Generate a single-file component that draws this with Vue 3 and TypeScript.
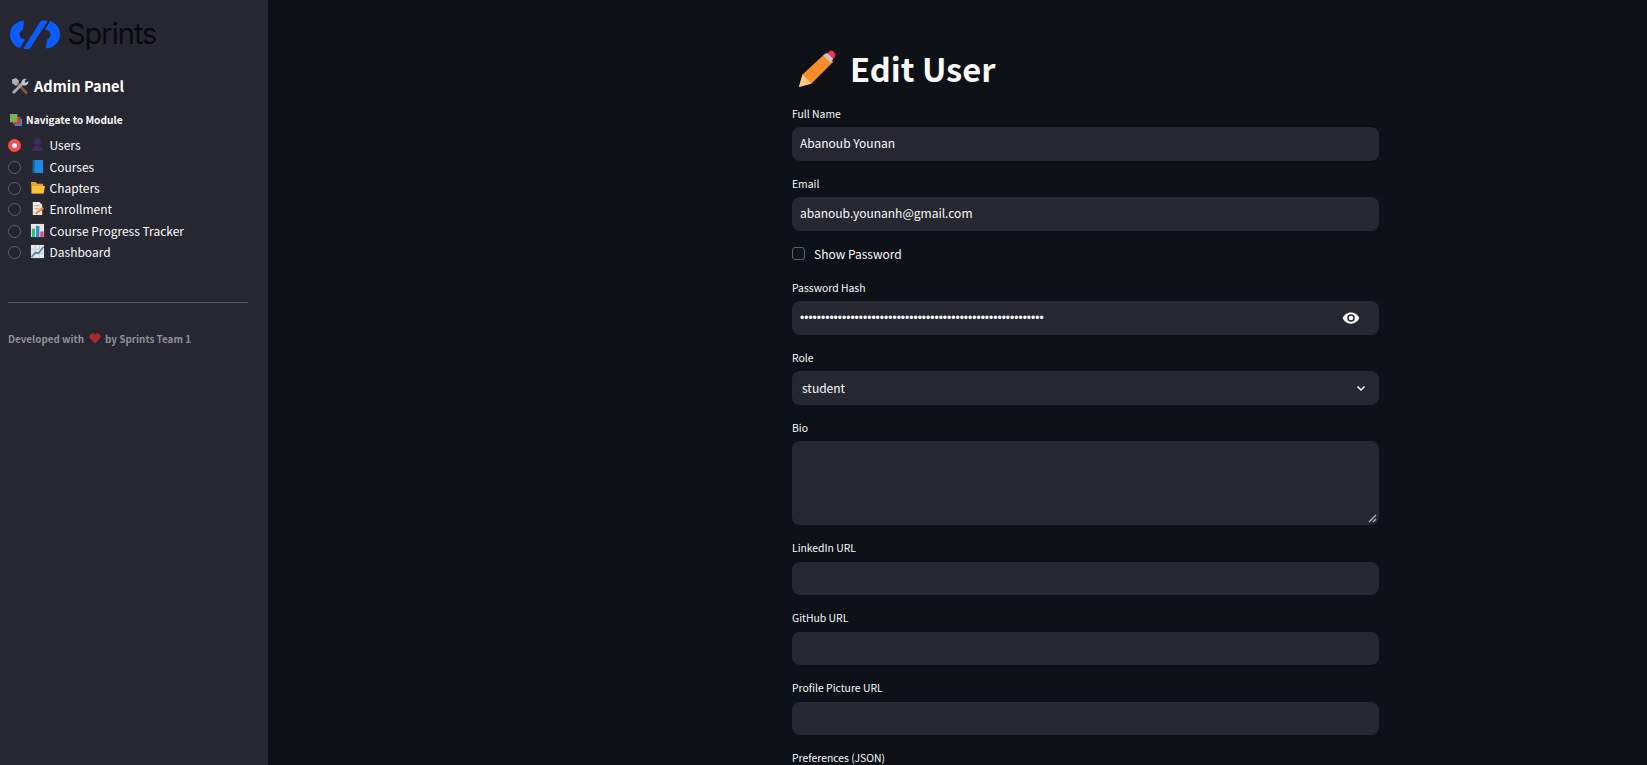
<script setup lang="ts">
const modules = [
  { name: 'Users', icon: 'user' },
  { name: 'Courses', icon: 'book' },
  { name: 'Chapters', icon: 'folder' },
  { name: 'Enrollment', icon: 'memo' },
  { name: 'Course Progress Tracker', icon: 'bars' },
  { name: 'Dashboard', icon: 'chart' },
]
const dots = '•'.repeat(58)
</script>

<template>
  <div class="page">
    <aside class="sidebar">
      <div class="logo">
        <svg width="50" height="29" viewBox="0 0 50 29">
          <path fill="#0b5cff" d="M14 .5C5 1.5 0 7.5 0 14.5 0 21.5 4.5 26.5 10 28L15 19.5C11.5 19 9.5 17 9.5 14.5 9.5 12 11 10.5 13 9.5Z" />
          <path fill="#0b5cff" transform="rotate(180 25 14.5)" d="M14 .5C5 1.5 0 7.5 0 14.5 0 21.5 4.5 26.5 10 28L15 19.5C11.5 19 9.5 17 9.5 14.5 9.5 12 11 10.5 13 9.5Z" />
          <path fill="#0b5cff" d="M32 .5H36Q37.5 .5 37 2L20.5 27.5Q19.5 29 18 29H15Q13.5 29 14 27.5L30 2Q31 .5 32 .5Z" />
        </svg>
        <span class="logo-text">Sprints</span>
      </div>
      <h3 class="panel-title">
        <svg width="18" height="17" viewBox="0 0 18 17">
          <path d="M5 4 L16 15.5" stroke="#8a5240" stroke-width="2.8" />
          <path d="M1 1.5 L5 0 L8 3 L7.5 5 L5 8 L1 5 Z" fill="#aeb2b8" />
          <path d="M2 15 L12 5" stroke="#a8acb2" stroke-width="2.8" />
          <path d="M10.5 5.5 C10 2.5 12.5 .2 15.5 .8 L13.5 3.2 L15 4.8 L17.4 2.8 C17.8 5.8 15.5 8 12.5 7.5 Z" fill="#c2c5ca" />
        </svg>
        Admin Panel
      </h3>
      <p class="nav-label">
        <svg width="12" height="12" viewBox="0 0 13 13">
          <rect x="5" y="5" width="8" height="8" fill="#3b88c3" />
          <rect x="3" y="3" width="8" height="8" fill="#dd2e44" />
          <rect x="0" y="0" width="8" height="9" fill="#77b255" />
        </svg>
        Navigate to Module
      </p>
      <ul class="radio-list">
        <li v-for="(m, i) in modules" :key="m.name" class="radio-row">
          <span class="radio" :class="{ on: i === 0 }"></span>
          <svg class="row-icon" width="15" height="15" viewBox="0 0 16 16">
            <template v-if="m.icon === 'user'">
              <circle cx="8" cy="5" r="3.8" fill="#452a5c" />
              <path d="M1.5 15 Q3.5 9 8 9 Q12.5 9 14.5 15 Z" fill="#452a5c" />
            </template>
            <template v-else-if="m.icon === 'book'">
              <rect x="3" y="1" width="11" height="14" rx="1" fill="#1e88e5" />
              <rect x="3" y="1" width="2" height="14" fill="#1565a8" />
            </template>
            <template v-else-if="m.icon === 'folder'">
              <path d="M1 2 H6 L8 4 H14 V14 H2 Z" fill="#e8a52b" />
              <path d="M2 6.5 H16 L14.5 14.5 H1.5 Z" fill="#fcc536" />
            </template>
            <template v-else-if="m.icon === 'memo'">
              <path d="M3 1 H10 L13 4 V15 H3 Z" fill="#ece7e1" />
              <path d="M5 5 H10 M5 8 H9" stroke="#a9a29a" />
              <path d="M5 13 L13 6 L15 8 L7 14 Z" fill="#f58634" />
            </template>
            <template v-else-if="m.icon === 'bars'">
              <rect x="1" y="1" width="14" height="14" fill="#e6e7e8" />
              <rect x="2" y="6" width="3.5" height="9" fill="#2dbd86" />
              <rect x="6.5" y="3" width="3.5" height="12" fill="#3b88c3" />
              <rect x="11" y="9" width="3.5" height="6" fill="#e5427f" />
            </template>
            <template v-else>
              <rect x="1" y="1" width="14" height="14" fill="#e6e7e8" />
              <path d="M1 5.5 H15 M1 10 H15 M5.5 1 V15 M10 1 V15" stroke="#b9bcc1" stroke-width=".6" />
              <path d="M1.5 14 L6 9 L9 10 L14.5 3" stroke="#3b88c3" stroke-width="1.7" fill="none" />
            </template>
          </svg>
          <span>{{ m.name }}</span>
        </li>
      </ul>
      <hr class="rule" />
      <p class="credit">
        Developed with
        <svg width="12" height="11" viewBox="0 0 13 12">
          <path d="M6.5 11.5 L1 6 A3.2 3.2 0 0 1 6.5 2 A3.2 3.2 0 0 1 12 6 Z" fill="#a82a30" />
        </svg>
        by Sprints Team 1
      </p>
    </aside>

    <main class="main">
      <h1 class="title">
        <svg class="pencil" width="38" height="38" viewBox="0 0 42 42">
          <path d="M1 41 L5 27 L30 4 L39 13 L15 37 Z" fill="#f78c2b" />
          <path d="M1 41 L5 27 L15 37 Z" fill="#fdc98a" />
          <path d="M31 5 L35 1 Q37 0 39 1.5 L41 4 Q42 6 40.5 8 L37 11 Z" fill="#f0325f" />
          <path d="M28 6 L32 3 L39 10 L36 14 Z" fill="#c9c9c9" />
        </svg>
        Edit User
      </h1>

      <div class="field">
        <label>Full Name</label>
        <div class="box">Abanoub Younan</div>
      </div>
      <div class="field">
        <label>Email</label>
        <div class="box">abanoub.younanh@gmail.com</div>
      </div>
      <div class="check">
        <span class="checkbox"></span>
        <span>Show Password</span>
      </div>
      <div class="field">
        <label>Password Hash</label>
        <div class="box between">
          <span class="dots">{{ dots }}</span>
          <svg class="eye" width="18" height="18" viewBox="0 0 24 24">
            <path fill="#fff" d="M12 4.5C7 4.5 2.7 7.6 1 12c1.7 4.4 6 7.5 11 7.5s9.3-3.1 11-7.5c-1.7-4.4-6-7.5-11-7.5zM12 17a5 5 0 1 1 0-10 5 5 0 0 1 0 10zm0-8a3 3 0 1 0 0 6 3 3 0 0 0 0-6z" />
          </svg>
        </div>
      </div>
      <div class="field">
        <label>Role</label>
        <div class="box between select">
          <span>student</span>
          <svg class="chev" width="12" height="8" viewBox="0 0 12 8">
            <path d="M2.5 2.5 L6 6 L9.5 2.5" stroke="#fff" stroke-width="1.5" fill="none" />
          </svg>
        </div>
      </div>
      <div class="field">
        <label>Bio</label>
        <div class="box area">
          <svg class="grip" width="9" height="9" viewBox="0 0 9 9">
            <path d="M1 8 L8 1 M5 8 L8 5" stroke="#b5b5bb" stroke-width="1.3" />
          </svg>
        </div>
      </div>
      <div class="field">
        <label>LinkedIn URL</label>
        <div class="box"></div>
      </div>
      <div class="field">
        <label>GitHub URL</label>
        <div class="box"></div>
      </div>
      <div class="field">
        <label>Profile Picture URL</label>
        <div class="box"></div>
      </div>
      <div class="field">
        <label>Preferences (JSON)</label>
      </div>
    </main>
  </div>
</template>

<style>
html, body {
  margin: 0;
  background: #0e1117;
  overflow: hidden;
}
</style>

<style scoped>
.page {
  display: flex;
  height: 765px;
  overflow: hidden;
  background: #0e1117;
  color: #fafafa;
  font-family: "Noto Sans CJK SC", "Noto Sans", sans-serif;
}
.sidebar {
  width: 268px;
  flex-shrink: 0;
  box-sizing: border-box;
  padding: 18px 20px 0 8px;
  background: #262730;
}
.logo {
  display: flex;
  align-items: center;
  gap: 7px;
  height: 32px;
  padding-left: 2px;
}
.logo-text {
  padding-bottom: 2px;
  font-family: Inter, sans-serif;
  font-size: 29px;
  letter-spacing: -1px;
  color: #0a0a0c;
}
.panel-title {
  display: flex;
  align-items: center;
  gap: 5px;
  margin: 24px 0 0 3px;
  font-size: 14.6px;
  font-weight: 700;
  line-height: 24px;
}
.nav-label {
  display: flex;
  align-items: center;
  gap: 4px;
  margin: 12px 0 0 2px;
  font-size: 10.2px;
  font-weight: 700;
  line-height: 20px;
}
.radio-list {
  list-style: none;
  margin: 4px 0 0;
  padding: 0;
}
.radio-row {
  display: flex;
  align-items: center;
  height: 21.4px;
  font-size: 12px;
}
.radio {
  box-sizing: border-box;
  width: 13px;
  height: 13px;
  margin-top: 2px;
  border: 1px solid #5f6068;
  border-radius: 50%;
  background: #23242c;
}
.radio.on {
  border: 4px solid #ff4b4b;
  background: #fff;
}
.row-icon {
  margin: 0 4.5px 0 9px;
}
.rule {
  margin: 39.6px 0 0;
  border: 0;
  border-top: 1px solid #55565f;
}
.credit {
  display: flex;
  align-items: center;
  gap: 4.5px;
  margin: 28px 0 0;
  font-size: 9.9px;
  font-weight: 600;
  line-height: 16px;
  color: #8f9096;
}
.main {
  width: 587px;
  padding: 39px 0 0 524px;
}
.title {
  display: flex;
  align-items: center;
  gap: 14px;
  margin: 0 0 6.6px;
  padding-left: 6px;
  height: 58px;
  font-size: 32.7px;
  font-weight: 700;
  line-height: 58px;
}
.pencil {
  margin-top: 1px;
}
.field {
  margin-bottom: 13px;
}
.field label {
  display: block;
  height: 16px;
  padding-top: 2px;
  margin-bottom: 5.4px;
  font-size: 10.4px;
  line-height: 16px;
}
.box {
  box-sizing: border-box;
  height: 33.6px;
  padding: 0 8px;
  border-radius: 8px;
  background: #262730;
  font-size: 12px;
  line-height: 32px;
}
.between {
  display: flex;
  align-items: center;
  justify-content: space-between;
}
.dots {
  font-family: "Liberation Sans", sans-serif;
  font-size: 12px;
}
.eye {
  margin-right: 11px;
}
.select {
  padding-left: 10px;
}
.chev {
  margin-right: 4px;
}
.area {
  position: relative;
  height: 84px;
}
.grip {
  position: absolute;
  right: 2px;
  bottom: 2px;
}
.check {
  display: flex;
  align-items: center;
  gap: 9px;
  height: 20px;
  margin-bottom: 14.5px;
  font-size: 12px;
}
.checkbox {
  box-sizing: border-box;
  width: 13px;
  height: 13px;
  border: 1px solid #5f6068;
  border-radius: 3px;
  background: #12141b;
}
</style>
